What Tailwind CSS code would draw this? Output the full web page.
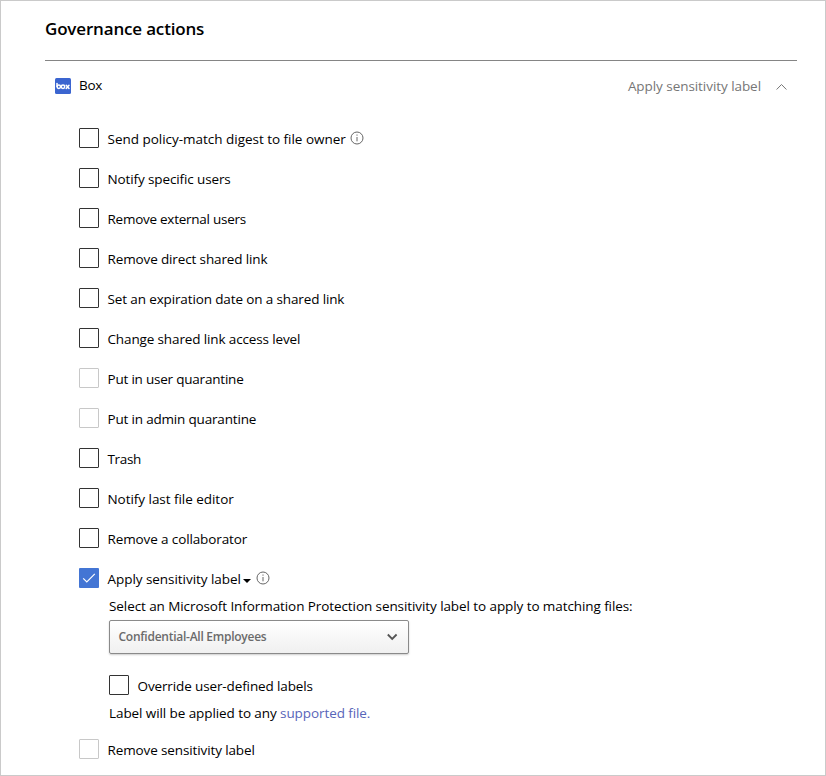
<!DOCTYPE html>
<html lang="en">
<head>
<meta charset="utf-8">
<title>Governance actions</title>
<script src="https://cdn.jsdelivr.net/npm/@tailwindcss/browser@4"></script>
</head>
<body class="bg-white">
<main class="w-[826px] h-[776px] border border-[#cacaca] pl-[44px] pr-7 overflow-hidden text-black text-[13.5px] leading-5 font-['Open_Sans','Noto_Sans',sans-serif]">
  <h1 class="h-[59px] pt-[14px] text-[17px] leading-[27px] font-semibold tracking-[-0.17px]"><span>Governance actions</span></h1>
  <div class="border-t border-[#858585]"></div>
  <header class="flex h-[57px] pt-[14px] pl-2.5 pr-[10px]">
    <svg class="mt-[3px] size-4 shrink-0" viewBox="0 0 16 16"><rect width="16" height="16" rx="1.5" fill="#3b65d0"/><g fill="none" stroke="#fff" stroke-width="1.5" stroke-linecap="round"><path d="M2 5.5v3"/><circle cx="3.8" cy="8.8" r="1.7"/><circle cx="8" cy="8.8" r="1.7"/><path d="M11.2 7.2l2.8 3.3M14 7.2l-2.8 3.3"/></g></svg>
    <span class="ml-2 h-5 tracking-[-0.3px]">Box</span>
    <span class="ml-auto mt-px h-5 text-[#767676] tracking-[-0.06px]">Apply sensitivity label</span>
    <svg class="ml-[15px] mt-[6px] w-[11px] h-3" viewBox="0 0 11 12" fill="none" stroke="#767676"><path d="M.6 8.5l4.9-5 4.9 5"/></svg>
  </header>
  <ul class="pl-[34px]">
    <li class="flex h-10 items-center"><i class="size-5 border border-[#333] rounded-[1px] mr-[8.5px]"></i><span class="mt-px tracking-[-0.02px]">Send policy-match digest to file owner</span>
      <svg class="ml-[4px] size-[14px]" viewBox="0 0 14 14" fill="none" stroke="#666"><circle cx="7" cy="7" r="6"/><path d="M7 6v4.3M7 3.5v1.2"/></svg></li>
    <li class="flex h-10 items-center"><i class="size-5 border border-[#333] rounded-[1px] mr-[8.5px]"></i><span class="mt-px tracking-[-0.12px]">Notify specific users</span></li>
    <li class="flex h-10 items-center"><i class="size-5 border border-[#333] rounded-[1px] mr-[8.5px]"></i><span class="mt-px tracking-[-0.26px]">Remove external users</span></li>
    <li class="flex h-10 items-center"><i class="size-5 border border-[#333] rounded-[1px] mr-[8.5px]"></i><span class="mt-px tracking-[-0.13px]">Remove direct shared link</span></li>
    <li class="flex h-10 items-center"><i class="size-5 border border-[#333] rounded-[1px] mr-[8.5px]"></i><span class="mt-px tracking-[-0.13px]">Set an expiration date on a shared link</span></li>
    <li class="flex h-10 items-center"><i class="size-5 border border-[#333] rounded-[1px] mr-[8.5px]"></i><span class="mt-px tracking-[-0.13px]">Change shared link access level</span></li>
    <li class="flex h-10 items-center"><i class="size-5 border border-[#c8c8c8] rounded-[1px] mr-[8.5px]"></i><span class="mt-px tracking-[-0.21px]">Put in user quarantine</span></li>
    <li class="flex h-10 items-center"><i class="size-5 border border-[#c8c8c8] rounded-[1px] mr-[8.5px]"></i><span class="mt-px tracking-[-0.18px]">Put in admin quarantine</span></li>
    <li class="flex h-10 items-center"><i class="size-5 border border-[#333] rounded-[1px] mr-[8.5px]"></i><span class="mt-px tracking-[-0.35px]">Trash</span></li>
    <li class="flex h-10 items-center"><i class="size-5 border border-[#333] rounded-[1px] mr-[8.5px]"></i><span class="mt-px tracking-[-0.04px]">Notify last file editor</span></li>
    <li class="flex h-10 items-center"><i class="size-5 border border-[#333] rounded-[1px] mr-[8.5px]"></i><span class="mt-px tracking-[-0.12px]">Remove a collaborator</span></li>
    <li>
      <div class="flex h-10 items-center">
        <svg class="size-5 mr-[8.5px]" viewBox="0 0 20 20"><rect width="20" height="20" rx="1" fill="#4375d4"/><path d="M4.2 10.3l3.6 3.6 8-8" fill="none" stroke="#fff" stroke-width="1.2"/></svg>
        <span class="mt-px tracking-[-0.05px]">Apply sensitivity label</span>
        <svg class="ml-[2px] mt-[5px] w-2 h-1" viewBox="0 0 8 4"><path d="M0 0h8L4 4z"/></svg>
        <svg class="ml-[5px] size-[14px]" viewBox="0 0 14 14" fill="none" stroke="#666"><circle cx="7" cy="7" r="6"/><path d="M7 6v4.3M7 3.5v1.2"/></svg>
      </div>
      <div class="pl-[30px]">
        <p class="h-[23px] -mt-[2px]"><span class="tracking-[-0.085px]">Select an Microsoft Information Protection sensitivity label to apply to matching files:</span></p>
        <div class="flex items-center justify-between w-[300px] h-[34px] mt-px border border-[#8a8a8a] rounded-[2px] bg-linear-to-b from-white to-[#f0f0f0] shadow-[0_1px_2px_#0003] pl-[8.5px] pr-[10px] text-[12px] font-semibold text-[#6b6b6b] tracking-[-0.26px]"><span>Confidential-All Employees</span>
          <svg class="w-3 h-3" viewBox="0 0 12 12" fill="none" stroke="#555" stroke-width="1.8"><path d="M1.8 3.5l4.4 4.5 4.4-4.5"/></svg></div>
        <div class="flex h-[26px] mt-[18px] items-center"><i class="size-5 border border-[#333] rounded-[1px] mr-[8.5px]"></i><span class="mt-px tracking-[-0.12px]">Override user-defined labels</span></div>
        <p class="h-[25px] pt-[5px]"><span class="tracking-[-0.085px]">Label will be applied to any <a class="text-[#5865b9]">supported file.</a></span></p>
      </div>
    </li>
    <li class="flex h-10 items-center mt-[6px]"><i class="size-5 border border-[#c8c8c8] rounded-[1px] mr-[8.5px]"></i><span class="mt-px tracking-[-0.12px]">Remove sensitivity label</span></li>
  </ul>
</main>
</body>
</html>
